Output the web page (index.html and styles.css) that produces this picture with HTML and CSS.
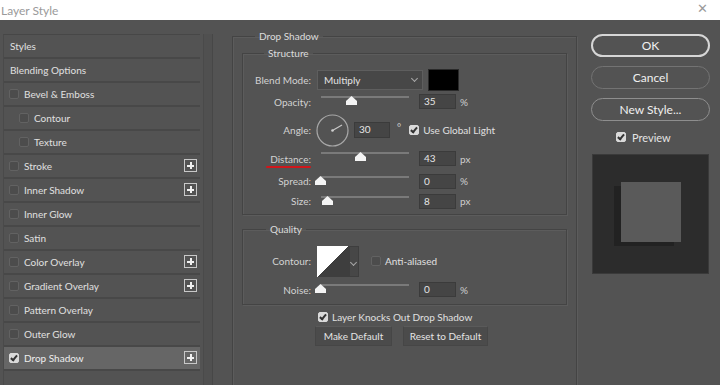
FILE: index.html
```html
<!DOCTYPE html>
<html lang="en">
<head>
  <meta charset="UTF-8">
  <title>Layer Style</title>
  <link rel="stylesheet" href="styles.css">
</head>
<body>
  <div class="titlebar">
    <span class="title">Layer Style</span>
    <span class="close">&#x2715;</span>
  </div>

  <div class="dialog">
    <div class="sidebar">
      <ul class="effects">
        <li class="effect plain-item">Styles</li>
        <li class="effect plain-item">Blending Options</li>
        <li class="effect"><span class="check"></span>Bevel &amp; Emboss</li>
        <li class="effect sub"><span class="check"></span>Contour</li>
        <li class="effect sub"><span class="check"></span>Texture</li>
        <li class="effect"><span class="check"></span>Stroke<span class="plus"></span></li>
        <li class="effect"><span class="check"></span>Inner Shadow<span class="plus"></span></li>
        <li class="effect"><span class="check"></span>Inner Glow</li>
        <li class="effect"><span class="check"></span>Satin</li>
        <li class="effect"><span class="check"></span>Color Overlay<span class="plus"></span></li>
        <li class="effect"><span class="check"></span>Gradient Overlay<span class="plus"></span></li>
        <li class="effect"><span class="check"></span>Pattern Overlay</li>
        <li class="effect"><span class="check"></span>Outer Glow</li>
        <li class="effect active"><span class="check on"></span>Drop Shadow<span class="plus"></span></li>
      </ul>
      <div class="scroll"></div>
    </div>

    <div class="settings">
      <fieldset class="group outer">
        <legend>Drop Shadow</legend>

        <fieldset class="group structure">
          <legend>Structure</legend>
          <div class="row blend">
            <label>Blend Mode:</label>
            <div class="select">Multiply<span class="chev"></span></div>
            <div class="swatch"></div>
          </div>
          <div class="row opacity">
            <label>Opacity:</label>
            <div class="slider"><span class="thumb" style="left: 25px"></span></div>
            <div class="field">35</div>
            <span class="unit">%</span>
          </div>
          <div class="row angle">
            <label>Angle:</label>
            <div class="dial">
              <svg width="33" height="33" viewBox="0 0 33 33">
                <circle cx="16.5" cy="16.5" r="15.5" fill="none" stroke="#a8a8a8" stroke-width="1.2"/>
                <line x1="16.5" y1="16.5" x2="26" y2="11" stroke="#c8c8c8" stroke-width="1.2"/>
                <circle cx="16.5" cy="16.5" r="1.3" fill="#d0d0d0"/>
              </svg>
            </div>
            <div class="field small">30</div>
            <span class="deg">&deg;</span>
            <span class="check on"></span>
            <span class="opt">Use Global Light</span>
          </div>
          <div class="row distance">
            <label class="marked">Distance:</label>
            <div class="slider"><span class="thumb" style="left: 34px"></span></div>
            <div class="field">43</div>
            <span class="unit">px</span>
          </div>
          <div class="row spread">
            <label>Spread:</label>
            <div class="slider"><span class="thumb" style="left: -6px"></span></div>
            <div class="field">0</div>
            <span class="unit">%</span>
          </div>
          <div class="row size">
            <label>Size:</label>
            <div class="slider"><span class="thumb" style="left: 1px"></span></div>
            <div class="field">8</div>
            <span class="unit">px</span>
          </div>
        </fieldset>

        <fieldset class="group quality">
          <legend>Quality</legend>
          <div class="row contour">
            <label>Contour:</label>
            <div class="curve"></div>
            <div class="curve-drop"><span class="chev"></span></div>
            <span class="check"></span>
            <span class="opt">Anti-aliased</span>
          </div>
          <div class="row noise">
            <label>Noise:</label>
            <div class="slider"><span class="thumb" style="left: -6px"></span></div>
            <div class="field">0</div>
            <span class="unit">%</span>
          </div>
        </fieldset>

        <div class="knock">
          <span class="check on"></span>
          <span class="opt">Layer Knocks Out Drop Shadow</span>
        </div>
        <div class="defaults">
          <button class="plain make">Make Default</button>
          <button class="plain reset">Reset to Default</button>
        </div>
      </fieldset>
    </div>

    <div class="actions">
      <button class="pill ok">OK</button>
      <button class="pill">Cancel</button>
      <button class="pill new">New Style...</button>
      <div class="preview-toggle">
        <span class="check on"></span>
        <span>Preview</span>
      </div>
      <div class="preview">
        <div class="shape"></div>
      </div>
    </div>
  </div>
</body>
</html>
```

FILE: styles.css
```css
body {
  margin: 0;
  font-family: Lato, "Noto Sans", sans-serif;
  font-size: 10px;
  color: #dcdcdc;
  background: #535353;
  overflow: hidden;
  height: 385px;
}
.titlebar {
  height: 20px;
  background: #ffffff;
  display: flex;
  align-items: center;
  justify-content: space-between;
  padding: 0 12px 0 1px;
  color: #9a9a9a;
  font-size: 12px;
}
.close {
  font-size: 13px;
  color: #9a9a9a;
  margin-top: -4px;
}
.dialog {
  display: flex;
  height: 365px;
}

/* left list of effects */
.sidebar {
  width: 213px;
  flex: none;
  display: flex;
  padding: 14px 0 0 3px;
  box-sizing: border-box;
}
.effects {
  list-style: none;
  margin: 0;
  padding: 0;
  width: 197px;
  border-top: 1px solid #474747;
  border-left: 1px solid #4a4a4a;
  box-sizing: border-box;
}
.effect {
  height: 22px;
  border-bottom: 2px solid #484848;
  display: flex;
  align-items: center;
  padding-left: 5px;
  position: relative;
  color: #e0e0e0;
}
.effect.plain-item {
  padding-left: 6px;
}
.effect .check {
  margin-right: 5px;
}
.effect.sub {
  padding-left: 15px;
}
.effect.active {
  background: #666666;
  color: #eeeeee;
}
.plus {
  position: absolute;
  right: 3px;
  top: 4px;
  width: 11px;
  height: 11px;
  border: 1px solid #c8c8c8;
  background:
    linear-gradient(#f0f0f0, #f0f0f0) center / 7px 2px no-repeat,
    linear-gradient(#f0f0f0, #f0f0f0) center / 2px 7px no-repeat;
}
.scroll {
  width: 8px;
  border-left: 1px solid #4a4a4a;
  border-right: 1px solid #474747;
  margin-left: 3px;
  background: #505050;
}

/* checkboxes */
.check {
  display: inline-block;
  width: 8px;
  height: 8px;
  border: 1px solid #626262;
  border-radius: 2px;
  background: #4c4c4c;
  flex: none;
  position: relative;
}
.check.on {
  background: #dadada;
  border-color: #dadada;
}
.check.on::after {
  content: "";
  position: absolute;
  left: 2px;
  top: 0;
  width: 2px;
  height: 5px;
  border: solid #333;
  border-width: 0 2px 2px 0;
  transform: rotate(40deg);
}

/* settings */
.settings {
  padding: 9px 0 0 19px;
  width: 345px;
  flex: none;
}
.group {
  border: 1px solid #444444;
  box-shadow: inset 1px 1px 0 #5c5c5c, 1px 1px 0 #5c5c5c;
  margin: 0;
  padding: 0 9px 3px 9px;
}
.group legend {
  padding: 0 4px;
  margin-left: 13px;
  line-height: 14px;
  color: #dcdcdc;
}
.outer {
  width: 345px;
  box-sizing: border-box;
  height: 400px;
  padding-top: 3px;
}
.structure legend {
  margin-left: 12px;
}
.quality {
  margin-top: 7px;
}
.quality legend {
  margin-left: 14px;
}
.row {
  display: flex;
  align-items: center;
  height: 20px;
}
.row label {
  width: 59px;
  text-align: right;
  margin-right: 6px;
  color: #d2d2d2;
  flex: none;
  white-space: nowrap;
}
.blend {
  height: 23px;
  margin-top: 8px;
}
.opacity {
  height: 22px;
}
.angle {
  height: 34px;
}
.distance {
  height: 24px;
}
.marked {
  position: relative;
}
.marked::after {
  content: "";
  position: absolute;
  left: 14px;
  right: 0;
  bottom: -3px;
  height: 2px;
  border-radius: 1px;
  background: #d0161b;
}
.select {
  width: 106px;
  height: 20px;
  box-sizing: border-box;
  border: 1px solid #5e5e5e;
  background: #474747;
  display: flex;
  align-items: center;
  padding-left: 6px;
  position: relative;
  color: #e4e4e4;
}
.chev {
  position: absolute;
  right: 5px;
  top: 5px;
  width: 4px;
  height: 4px;
  border: solid #a8a8a8;
  border-width: 0 1px 1px 0;
  transform: rotate(45deg);
}
.swatch {
  width: 31px;
  height: 22px;
  box-sizing: border-box;
  background: #000;
  border: 1px solid #2a2a2a;
  margin-left: 5px;
}
.slider {
  width: 88px;
  height: 14px;
  margin-left: 4px;
  position: relative;
  align-self: flex-start;
  margin-top: 5px;
  background: linear-gradient(#7a7a7a, #7a7a7a) top / 100% 2px no-repeat;
}
.thumb {
  position: absolute;
  top: 0;
  width: 11px;
  height: 9px;
  background: #f4f4f4;
  clip-path: polygon(50% 0, 100% 55%, 100% 100%, 0 100%, 0 55%);
}
.field {
  width: 37px;
  height: 15px;
  box-sizing: border-box;
  background: #454545;
  border: 1px solid #3b3b3b;
  padding-left: 4px;
  line-height: 13px;
  margin-left: 10px;
  color: #e6e6e6;
}
.opacity .field, .distance .field, .noise .field {
  margin-top: -1px;
}
.field.small {
  width: 36px;
  height: 16px;
  margin-left: 5px;
}
.unit {
  margin-left: 4px;
  color: #cfcfcf;
}
.dial {
  width: 33px;
  height: 33px;
  margin-left: -1px;
}
.deg {
  margin: -6px 8px 0 7px;
  color: #cfcfcf;
}
.opt {
  margin-left: 4px;
  color: #e0e0e0;
}
.contour {
  height: 32px;
  margin-top: 9px;
}
.curve {
  width: 32px;
  height: 31px;
  background: linear-gradient(to top left, #3e3e3e 50%, #ffffff 50%);
}
.curve-drop {
  width: 10px;
  height: 31px;
  box-sizing: border-box;
  background: #474747;
  border: 1px solid #3e3e3e;
  position: relative;
}
.curve-drop .chev {
  right: 2px;
  top: 13px;
}
.contour .check {
  margin-left: 12px;
}
.noise {
  height: 22px;
  margin-top: 2px;
}
.knock {
  display: flex;
  align-items: center;
  margin: 6px 0 0 76px;
  height: 12px;
}
.defaults {
  display: flex;
  gap: 11px;
  margin: 3px 0 0 73px;
}
.plain {
  height: 20px;
  border: 1px solid #464646;
  border-top-color: #5a5a5a;
  background: #4b4b4b;
  color: #e4e4e4;
  font-family: inherit;
  font-size: 10px;
  padding: 0;
}
.make {
  width: 77px;
}
.reset {
  width: 85px;
}

/* right column */
.actions {
  margin-left: 14px;
  width: 119px;
  flex: none;
  padding-top: 14px;
  display: flex;
  flex-direction: column;
}
.pill {
  height: 23px;
  margin-bottom: 9px;
  border-radius: 12px;
  border: 1px solid #737373;
  background: #535353;
  color: #f0f0f0;
  font-family: inherit;
  font-size: 12px;
  padding: 0;
}
.ok {
  border: 2px solid #d6d6d6;
}
.new {
  border-color: #8e8e8e;
}
.preview-toggle {
  display: flex;
  align-items: center;
  gap: 6px;
  margin: -2px 0 0 25px;
  height: 18px;
  font-size: 11px;
  color: #e4e4e4;
}
.preview {
  margin-top: 8px;
  margin-left: 1px;
  width: 117px;
  height: 120px;
  background: #2c2c2c;
  border: 1px solid #3a3a3a;
  box-sizing: border-box;
  display: flex;
  align-items: center;
  justify-content: center;
}
.shape {
  width: 60px;
  height: 60px;
  background: #5a5a5a;
  box-shadow: -7px 4px 0 #222222;
  margin: 0 0 0 1px;
  transform: translateY(-2px);
}
```
